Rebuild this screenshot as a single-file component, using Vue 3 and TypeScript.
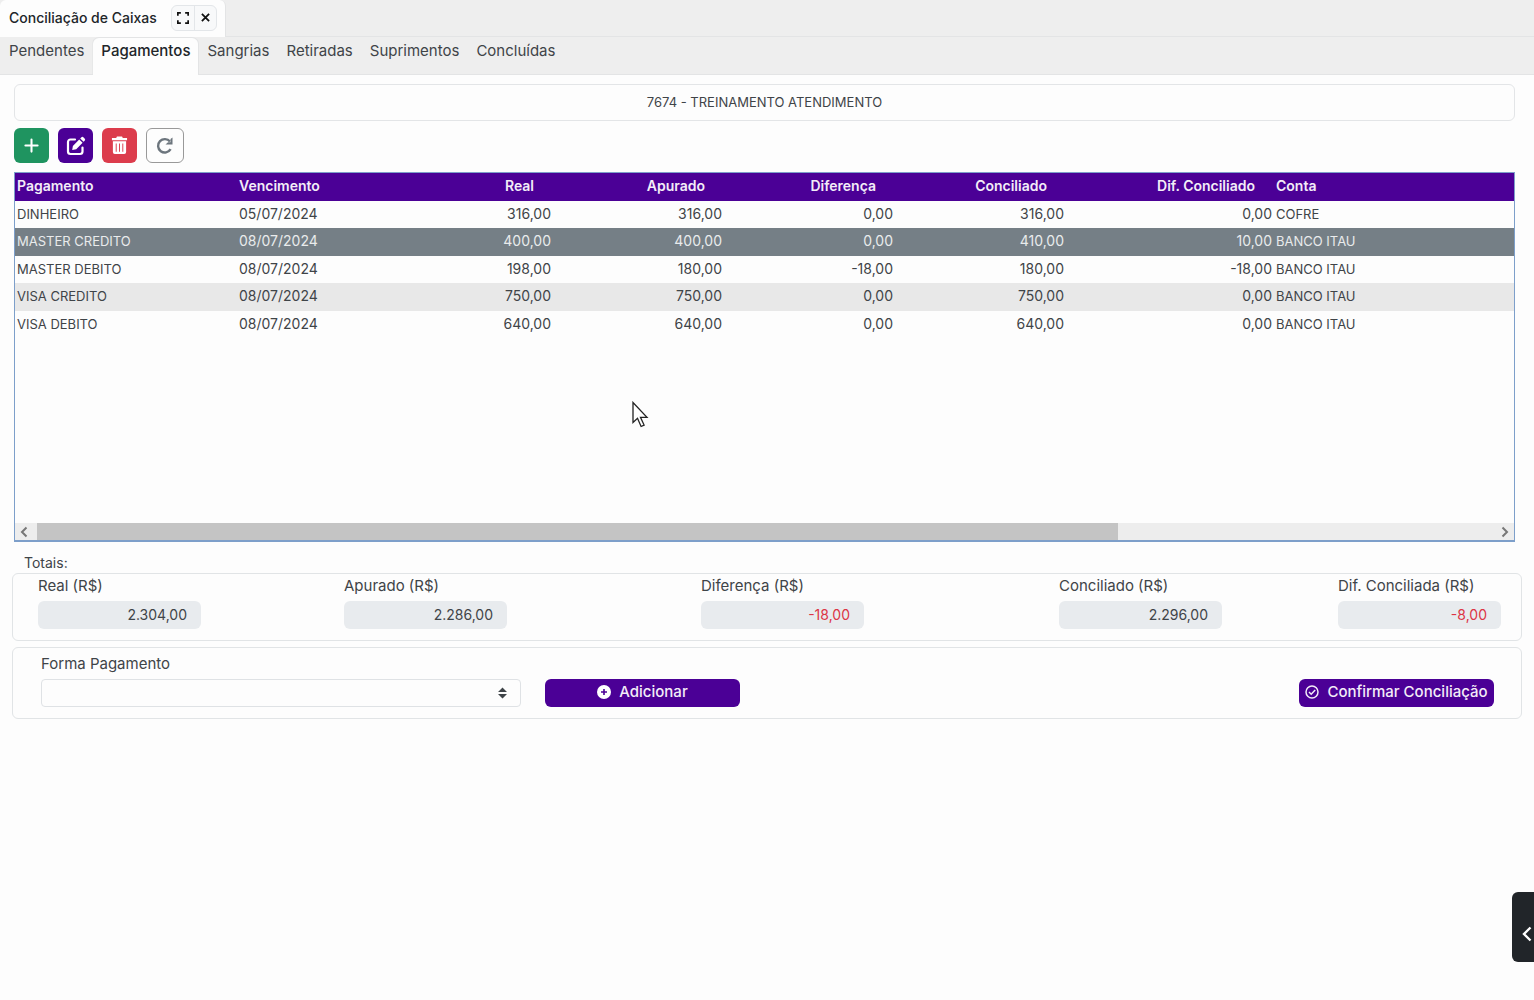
<script setup lang="ts">
import { ref } from 'vue'

interface Payment {
  name: string
  due: string
  real: string
  counted: string
  diff: string
  reconciled: string
  reconciledDiff: string
  account: string
}

interface Total {
  id: string
  label: string
  value: string
}

const tabs: string[] = ['Pendentes', 'Pagamentos', 'Sangrias', 'Retiradas', 'Suprimentos', 'Concluídas']
const activeTab = ref('Pagamentos')
const selectedRow = ref(1)

const payments: Payment[] = [
  { name: 'DINHEIRO', due: '05/07/2024', real: '316,00', counted: '316,00', diff: '0,00', reconciled: '316,00', reconciledDiff: '0,00', account: 'COFRE' },
  { name: 'MASTER CREDITO', due: '08/07/2024', real: '400,00', counted: '400,00', diff: '0,00', reconciled: '410,00', reconciledDiff: '10,00', account: 'BANCO ITAU' },
  { name: 'MASTER DEBITO', due: '08/07/2024', real: '198,00', counted: '180,00', diff: '-18,00', reconciled: '180,00', reconciledDiff: '-18,00', account: 'BANCO ITAU' },
  { name: 'VISA CREDITO', due: '08/07/2024', real: '750,00', counted: '750,00', diff: '0,00', reconciled: '750,00', reconciledDiff: '0,00', account: 'BANCO ITAU' },
  { name: 'VISA DEBITO', due: '08/07/2024', real: '640,00', counted: '640,00', diff: '0,00', reconciled: '640,00', reconciledDiff: '0,00', account: 'BANCO ITAU' },
]

const totals: Total[] = [
  { id: 'real', label: 'Real (R$)', value: '2.304,00' },
  { id: 'apurado', label: 'Apurado (R$)', value: '2.286,00' },
  { id: 'diferenca', label: 'Diferença (R$)', value: '-18,00' },
  { id: 'conciliado', label: 'Conciliado (R$)', value: '2.296,00' },
  { id: 'dif-conciliada', label: 'Dif. Conciliada (R$)', value: '-8,00' },
]
</script>

<template>
  <div class="page">
    <header class="window-bar">
      <div class="window-tab">
        <span class="window-title">Conciliação de Caixas</span>
        <div class="window-actions">
          <button type="button" aria-label="Expandir">
            <svg width="12" height="12" viewBox="0 0 14 14" fill="none" stroke="currentColor" stroke-width="2">
              <path d="M1 4.500V1h3.500M9.500 1H13v3.500M13 9.500V13H9.500M4.500 13H1V9.500" />
            </svg>
          </button>
          <button type="button" aria-label="Fechar">
            <svg width="9" height="9" viewBox="0 0 10 10" fill="none" stroke="currentColor" stroke-width="2">
              <path d="M1 1l8 8M9 1l-8 8" />
            </svg>
          </button>
        </div>
      </div>
    </header>

    <nav class="tabs">
      <button
        v-for="tab in tabs"
        :key="tab"
        type="button"
        class="tab"
        :class="{ active: tab === activeTab }"
        @click="activeTab = tab"
      >{{ tab }}</button>
    </nav>

    <main class="content">
      <h1 class="title">7674 - TREINAMENTO ATENDIMENTO</h1>

      <div class="toolbar">
        <button type="button" class="tool add" aria-label="Adicionar">
          <svg width="15" height="15" viewBox="0 0 16 16" fill="none" stroke="currentColor" stroke-width="2.200" stroke-linecap="round">
            <path d="M8 1.500v13M1.500 8h13" />
          </svg>
        </button>
        <button type="button" class="tool edit" aria-label="Editar">
          <svg width="20" height="20" viewBox="0 0 20 20" fill="none">
            <path d="M9 3.500H4.500a2.500 2.500 0 0 0-2.500 2.500v9.500A2.500 2.500 0 0 0 4.500 18H14a2.500 2.500 0 0 0 2.500-2.500V11.500" stroke="currentColor" stroke-width="2.200" stroke-linecap="round" />
            <path d="M13.200 3.400l3.400 3.400-6.400 6.400-4 .700.700-4zM14.200 2.400l1-1a1.700 1.700 0 0 1 2.400 0l1 1a1.700 1.700 0 0 1 0 2.400l-1 1z" fill="currentColor" />
          </svg>
        </button>
        <button type="button" class="tool remove" aria-label="Excluir">
          <svg width="17" height="19" viewBox="0 0 18 20" fill="currentColor">
            <path d="M5.500 2L6.300.500h5.400L12.500 2H17v2.500H1V2z" />
            <path fill-rule="evenodd" d="M2 5.500h14V17a2 2 0 0 1-2 2H4a2 2 0 0 1-2-2zM5 8v8.500h1V8zM8.500 8v8.500h1V8zM12 8v8.500h1V8z" />
          </svg>
        </button>
        <button type="button" class="tool reload" aria-label="Atualizar">
          <svg width="20" height="20" viewBox="0 0 20 20" fill="none">
            <path d="M15.600 13.200A6.700 6.700 0 1 1 15 5.600" stroke="currentColor" stroke-width="2.400" />
            <path d="M17.500 1.500v7h-7l2.500-2.200h2.500V3z" fill="currentColor" />
          </svg>
        </button>
      </div>

      <section class="grid-box">
        <table class="grid">
          <colgroup>
            <col class="c-name" />
            <col class="c-due" />
            <col class="c-value" />
            <col class="c-value" />
            <col class="c-value" />
            <col class="c-value" />
            <col class="c-diff" />
            <col />
          </colgroup>
          <thead>
            <tr>
              <th>Pagamento</th>
              <th>Vencimento</th>
              <th class="num">Real</th>
              <th class="num">Apurado</th>
              <th class="num">Diferença</th>
              <th class="num">Conciliado</th>
              <th class="num">Dif. Conciliado</th>
              <th>Conta</th>
            </tr>
          </thead>
          <tbody>
            <tr
              v-for="(p, i) in payments"
              :key="p.name"
              :class="{ selected: i === selectedRow }"
              @click="selectedRow = i"
            >
              <td class="caps">{{ p.name }}</td>
              <td>{{ p.due }}</td>
              <td class="num">{{ p.real }}</td>
              <td class="num">{{ p.counted }}</td>
              <td class="num">{{ p.diff }}</td>
              <td class="num">{{ p.reconciled }}</td>
              <td class="num">{{ p.reconciledDiff }}</td>
              <td class="caps">{{ p.account }}</td>
            </tr>
          </tbody>
        </table>
        <div class="scrollbar">
          <button type="button" aria-label="Rolar para a esquerda">
            <svg width="8" height="12" viewBox="0 0 8 12" fill="none" stroke="currentColor" stroke-width="2"><path d="M6.500 1.500L2 6l4.500 4.500" /></svg>
          </button>
          <div class="track"><div class="thumb"></div></div>
          <button type="button" aria-label="Rolar para a direita">
            <svg width="8" height="12" viewBox="0 0 8 12" fill="none" stroke="currentColor" stroke-width="2"><path d="M1.500 1.500L6 6l-4.500 4.500" /></svg>
          </button>
        </div>
      </section>
    </main>

    <section class="footer-panels">
      <h2 class="totals-title">Totais:</h2>
      <div class="panel totals">
        <div v-for="t in totals" :key="t.id" class="total">
          <label :for="t.id">{{ t.label }}</label>
          <input :id="t.id" type="text" readonly :value="t.value" :class="{ negative: t.value.startsWith('-') }" />
        </div>
      </div>

      <form class="panel payment-form" @submit.prevent>
        <div class="method">
          <label for="forma">Forma Pagamento</label>
          <div class="select-wrap">
            <select id="forma"><option value=""></option></select>
            <svg width="9" height="12" viewBox="0 0 9 12" fill="currentColor"><path d="M4.500 0.500L9 5H0zM4.500 11.500L0 7h9z" /></svg>
          </div>
        </div>
        <button type="button" class="primary">
          <svg width="14" height="14" viewBox="0 0 14 14"><circle cx="7" cy="7" r="7" fill="#fff" /><path d="M7 4v6M4 7h6" stroke="#4b0096" stroke-width="1.600" /></svg>
          Adicionar
        </button>
        <button type="submit" class="primary confirm">
          <svg width="14" height="14" viewBox="0 0 14 14" fill="none" stroke="currentColor" stroke-width="1.500"><circle cx="7" cy="7" r="6" /><path d="M4 7l2.200 2.200L10.200 5" /></svg>
          Confirmar Conciliação
        </button>
      </form>
    </section>

    <button type="button" class="drawer" aria-label="Abrir painel">
      <svg width="10" height="16" viewBox="0 0 10 16" fill="none" stroke="currentColor" stroke-width="2.400"><path d="M8.500 1.500L2 8l6.500 6.500" /></svg>
    </button>

    <svg class="pointer" width="18" height="28" viewBox="0 0 18 28" fill="#fff" stroke="#222" stroke-width="1.300">
      <path d="M1 1.500v20l4.500-4.200 3.600 8.200 3-1.400-3.600-7.800H15z" />
    </svg>
  </div>
</template>

<style>
body {
  background: #fdfdfd;
}
</style>

<style scoped>
* {
  box-sizing: border-box;
}

.page {
  position: relative;
  min-height: 100vh;
  background: #fdfdfd;
  color: #3f4448;
  font-family: Inter, "Liberation Sans", sans-serif;
  font-size: 14px;
  line-height: 20px;
}

button,
input,
select {
  margin: 0;
  font: inherit;
  color: inherit;
}

button {
  display: flex;
  align-items: center;
  justify-content: center;
  padding: 0;
  border: 0;
  background: none;
}

.window-bar {
  display: flex;
  height: 37px;
  background: #eee;
  border-bottom: 1px solid #e3e4e5;
}

.window-tab {
  display: flex;
  align-items: center;
  gap: 14px;
  height: 37px;
  padding: 0 8px 2px 9px;
  background: #fdfdfd;
  border-right: 1px solid #e3e4e5;
  border-radius: 6px 6px 0 0;
}

.window-title {
  color: #212529;
  font-weight: 500;
}

.window-actions {
  display: flex;
  height: 26px;
  border: 1px solid #e3e6e9;
  border-radius: 6px;
  background: #f8f9fa;
  color: #111;
}

.window-actions button {
  width: 22px;
}

.window-actions button + button {
  border-left: 1px solid #e3e6e9;
}

.tabs {
  display: flex;
  gap: 1px;
  height: 38px;
  padding: 1px 1px 0;
  background: #eee;
  border-bottom: 1px solid #e3e4e5;
}

.tab {
  align-items: flex-start;
  height: 37px;
  padding: 3px 8px;
  border-radius: 6px 6px 0 0;
  font-size: 15px;
}

.tab.active {
  background: #fdfdfd;
  box-shadow: 0 0 0 1px #e3e4e5;
  clip-path: inset(-1px -1px 0);
  color: #212529;
  font-weight: 500;
}

.content {
  padding: 9px 19px 0 14px;
}

.title {
  margin: 0;
  padding: 7px 8px 8px;
  border: 1px solid #e3e5e7;
  border-radius: 6px;
  font-size: 13px;
  font-weight: 400;
  text-align: center;
}

.toolbar {
  display: flex;
  gap: 9px;
  padding: 7px 0 9px;
}

.tool {
  width: 35px;
  height: 35px;
  border-radius: 6px;
  color: #fff;
}

.add {
  background: #1f9460;
}

.edit {
  background: #4b0096;
}

.remove {
  background: #dc3c4c;
}

.reload {
  width: 38px;
  border: 1px solid #999;
  color: #6c757d;
}

.grid-box {
  display: flex;
  flex-direction: column;
  justify-content: space-between;
  min-height: 370px;
  border: 1px solid #7d9fca;
  border-bottom-width: 2px;
}

.grid {
  width: 100%;
  border-collapse: collapse;
  table-layout: fixed;
}

.c-name {
  width: 222px;
}

.c-due {
  width: 145px;
}

.c-value {
  width: 171px;
}

.c-diff {
  width: 208px;
}

th,
td {
  height: 27px;
  padding: 0 2px 2px;
  text-align: left;
  white-space: nowrap;
}

th {
  height: 28px;
  background: #4b0096;
  color: #f3edf8;
  font-weight: 600;
}

.num {
  text-align: right;
}

.caps {
  font-size: 13px;
}

th.num {
  padding-right: 19px;
}

tbody tr:nth-child(even) td {
  height: 28px;
  background: #e8e8e8;
}

tbody tr.selected td {
  background: #757f86;
  color: #e9ebec;
}

.scrollbar {
  display: flex;
  height: 17px;
  background: #ededed;
  color: #777;
}

.scrollbar button {
  width: 22px;
  padding-right: 4px;
}

.scrollbar button:last-child {
  padding: 0 0 0 4px;
}

.track {
  flex: 1;
}

.thumb {
  width: 74.3%;
  height: 100%;
  background: #c4c4c4;
}

.footer-panels {
  padding: 11px 12px 0;
}

.totals-title {
  margin: 0 0 0 12px;
  font-size: 14px;
  font-weight: 400;
}

.panel {
  border: 1px solid #e1e4e6;
  border-radius: 6px;
}

.totals {
  display: grid;
  grid-template-columns: 306fr 357fr 358fr 279fr 163px;
  padding: 2px 20px 11px 25px;
}

.total label,
.method label {
  display: block;
  margin-bottom: 5px;
  font-size: 15px;
}

.total input {
  display: block;
  width: 163px;
  height: 28px;
  padding: 0 14px 2px;
  border: 0;
  border-radius: 6px;
  background: #e8ebee;
  text-align: right;
}

.total input.negative {
  color: #dc3545;
}

.payment-form {
  display: flex;
  align-items: flex-end;
  gap: 24px;
  margin-top: 6px;
  padding: 6px 27px 11px 28px;
}

.method {
  width: 480px;
}

.select-wrap {
  position: relative;
}

.select-wrap select {
  display: block;
  width: 100%;
  height: 28px;
  border: 1px solid #dfe2e5;
  border-radius: 4px;
  background: #fdfdfd;
  appearance: none;
}

.select-wrap svg {
  position: absolute;
  top: 8px;
  right: 14px;
  pointer-events: none;
}

.primary {
  gap: 8px;
  width: 195px;
  height: 28px;
  padding-bottom: 2px;
  border-radius: 6px;
  background: #4b0096;
  color: #f3edf8;
  font-size: 15px;
  font-weight: 500;
  white-space: nowrap;
}

.confirm {
  margin-left: auto;
}

.drawer {
  position: fixed;
  right: 0;
  bottom: 38px;
  width: 22px;
  height: 70px;
  padding: 14px 0 0 8px;
  border-radius: 6px 0 0 6px;
  background: #212529;
  color: #fff;
}

.pointer {
  position: absolute;
  top: 401px;
  left: 632px;
  pointer-events: none;
}
</style>
